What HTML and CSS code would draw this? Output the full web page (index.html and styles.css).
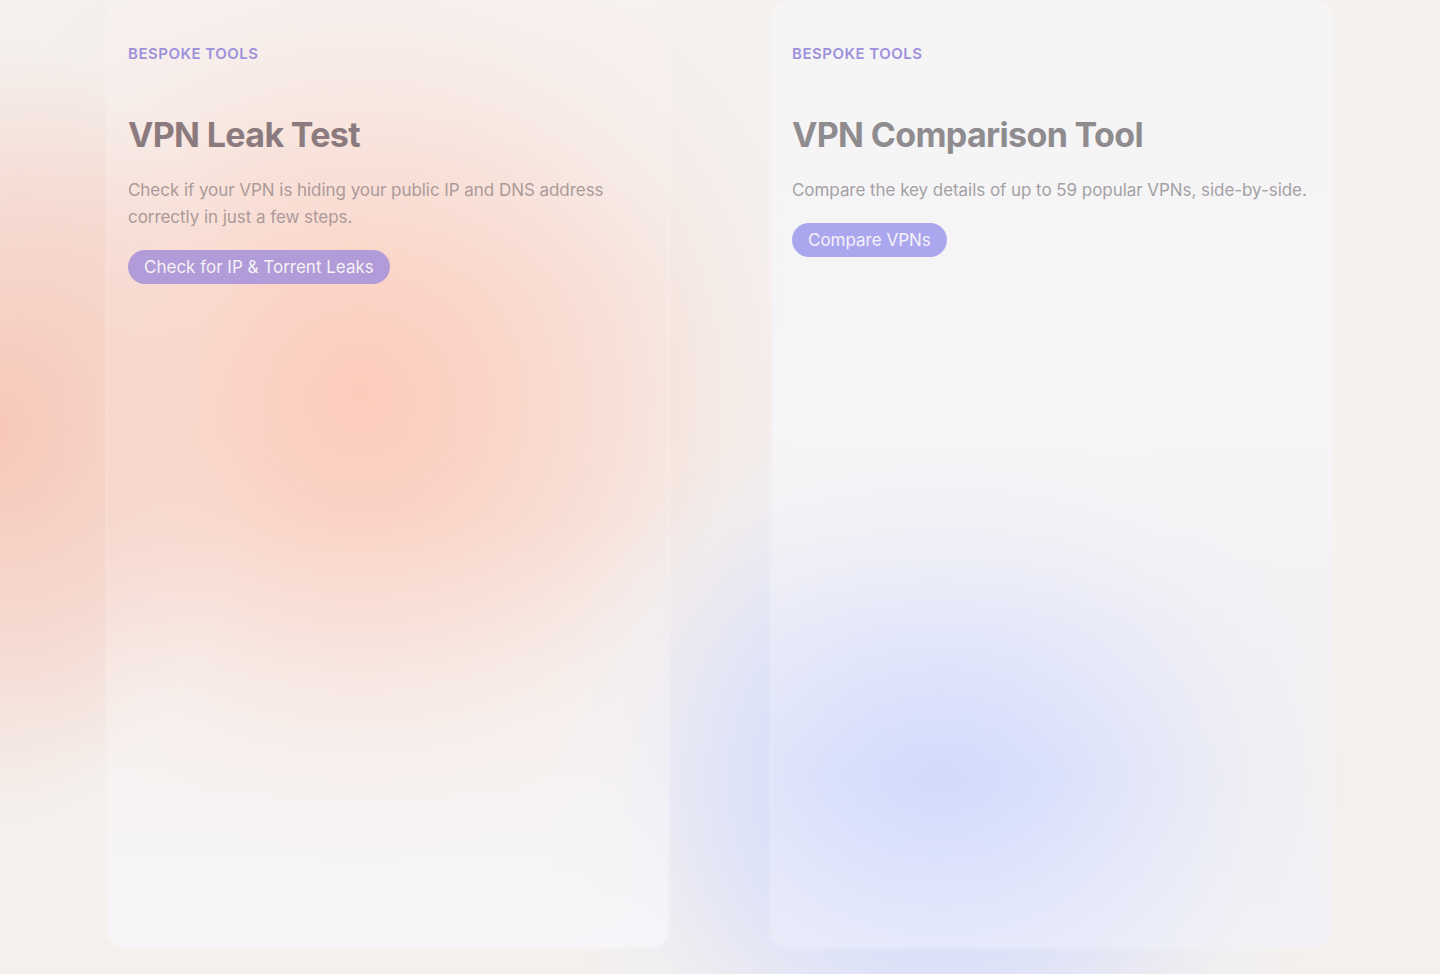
FILE: index.html
```html
<!DOCTYPE html>
<html lang="en">
<head>
<meta charset="utf-8">
<title>Bespoke Tools</title>
<link rel="stylesheet" href="styles.css">
</head>
<body>
<div class="page">
  <div class="blob blob-salmon"></div>
  <div class="blob blob-salmon-left"></div>
  <div class="blob blob-blue"></div>
  <main class="cards">
    <section class="card card-left">
      <p class="eyebrow">BESPOKE TOOLS</p>
      <h2 class="title">VPN Leak Test</h2>
      <p class="desc">Check if your VPN is hiding your public IP and DNS address correctly in just a few steps.</p>
      <a class="btn btn-left" href="#">Check for IP &amp; Torrent Leaks</a>
    </section>
    <section class="card card-right">
      <p class="eyebrow">BESPOKE TOOLS</p>
      <h2 class="title">VPN Comparison Tool</h2>
      <p class="desc">Compare the key details of up to 59 popular VPNs, side-by-side.</p>
      <a class="btn btn-right" href="#">Compare VPNs</a>
    </section>
  </main>
</div>
</body>
</html>
```
FILE: styles.css
```css
html, body {
  margin: 0;
  padding: 0;
}
body {
  background: #f4f0ee;
  font-family: Inter, Lato, "Liberation Sans", sans-serif;
  overflow: hidden;
}
.page {
  position: relative;
  width: 1440px;
  height: 974px;
  overflow: hidden;
  background: #f4f0ee;
}
.blob {
  position: absolute;
  border-radius: 50%;
  pointer-events: none;
}
.blob-salmon {
  left: -100px;
  top: -80px;
  width: 920px;
  height: 940px;
  background: radial-gradient(closest-side, rgba(253,196,178,1) 0%, rgba(251,204,188,0.92) 28%, rgba(248,214,202,0.75) 55%, rgba(245,228,222,0.42) 80%, rgba(244,240,238,0) 100%);
}
.blob-salmon-left {
  left: -240px;
  top: 40px;
  width: 480px;
  height: 780px;
  background: radial-gradient(closest-side, rgba(248,196,180,0.9) 0%, rgba(246,206,193,0.6) 55%, rgba(244,240,238,0) 100%);
}
.blob-blue {
  left: 540px;
  top: 380px;
  width: 800px;
  height: 800px;
  background: radial-gradient(closest-side, rgba(200,210,252,1) 0%, rgba(208,217,252,0.92) 28%, rgba(218,224,250,0.7) 55%, rgba(232,234,246,0.32) 82%, rgba(244,240,238,0) 100%);
}
.cards {
  position: relative;
  display: flex;
  gap: 104px;
  padding: 2px 0 0 108px;
}
.card {
  width: 560px;
  height: 945px;
  box-sizing: border-box;
  padding: 43px 20px 20px;
  border-radius: 16px;
}
.card-left {
  background: linear-gradient(180deg, rgba(250,242,240,0.5) 0%, rgba(252,240,236,0.2) 30%, rgba(252,244,242,0.12) 55%, rgba(250,246,246,0.45) 80%, rgba(247,246,250,0.85) 100%);
  box-shadow: 0 0 6px rgba(255,255,255,0.5);
}
.card-right {
  background: linear-gradient(180deg, rgba(246,245,246,0.97) 0%, rgba(246,245,247,0.92) 45%, rgba(242,242,250,0.45) 66%, rgba(240,242,252,0.25) 82%, rgba(240,242,252,0.5) 100%);
  box-shadow: 0 0 6px rgba(255,255,255,0.5);
}
.eyebrow {
  margin: 0;
  font-size: 15px;
  line-height: 18px;
  font-weight: 600;
  letter-spacing: 0.5px;
  color: #9d91dc;
}
.title {
  margin: 51px 0 0;
  font-size: 34px;
  line-height: 42px;
  font-weight: 700;
  letter-spacing: -0.65px;
}
.card-left .title { color: #8b7b7e; }
.card-right .title { color: #8f8c90; }
.desc {
  margin: 21px 0 0;
  font-size: 17px;
  line-height: 27px;
  letter-spacing: -0.05px;
}
.card-left .desc { color: #ab9a9a; }
.card-right .desc { color: #a4a1a4; }
.btn {
  display: inline-block;
  margin-top: 19px;
  height: 34px;
  line-height: 34px;
  padding: 0 16px;
  border-radius: 17px;
  font-size: 17px;
  color: #f6f2f6;
  text-decoration: none;
}
.btn-left { background: #b19bd8; }
.btn-right { background: #aba7ee; }
```
